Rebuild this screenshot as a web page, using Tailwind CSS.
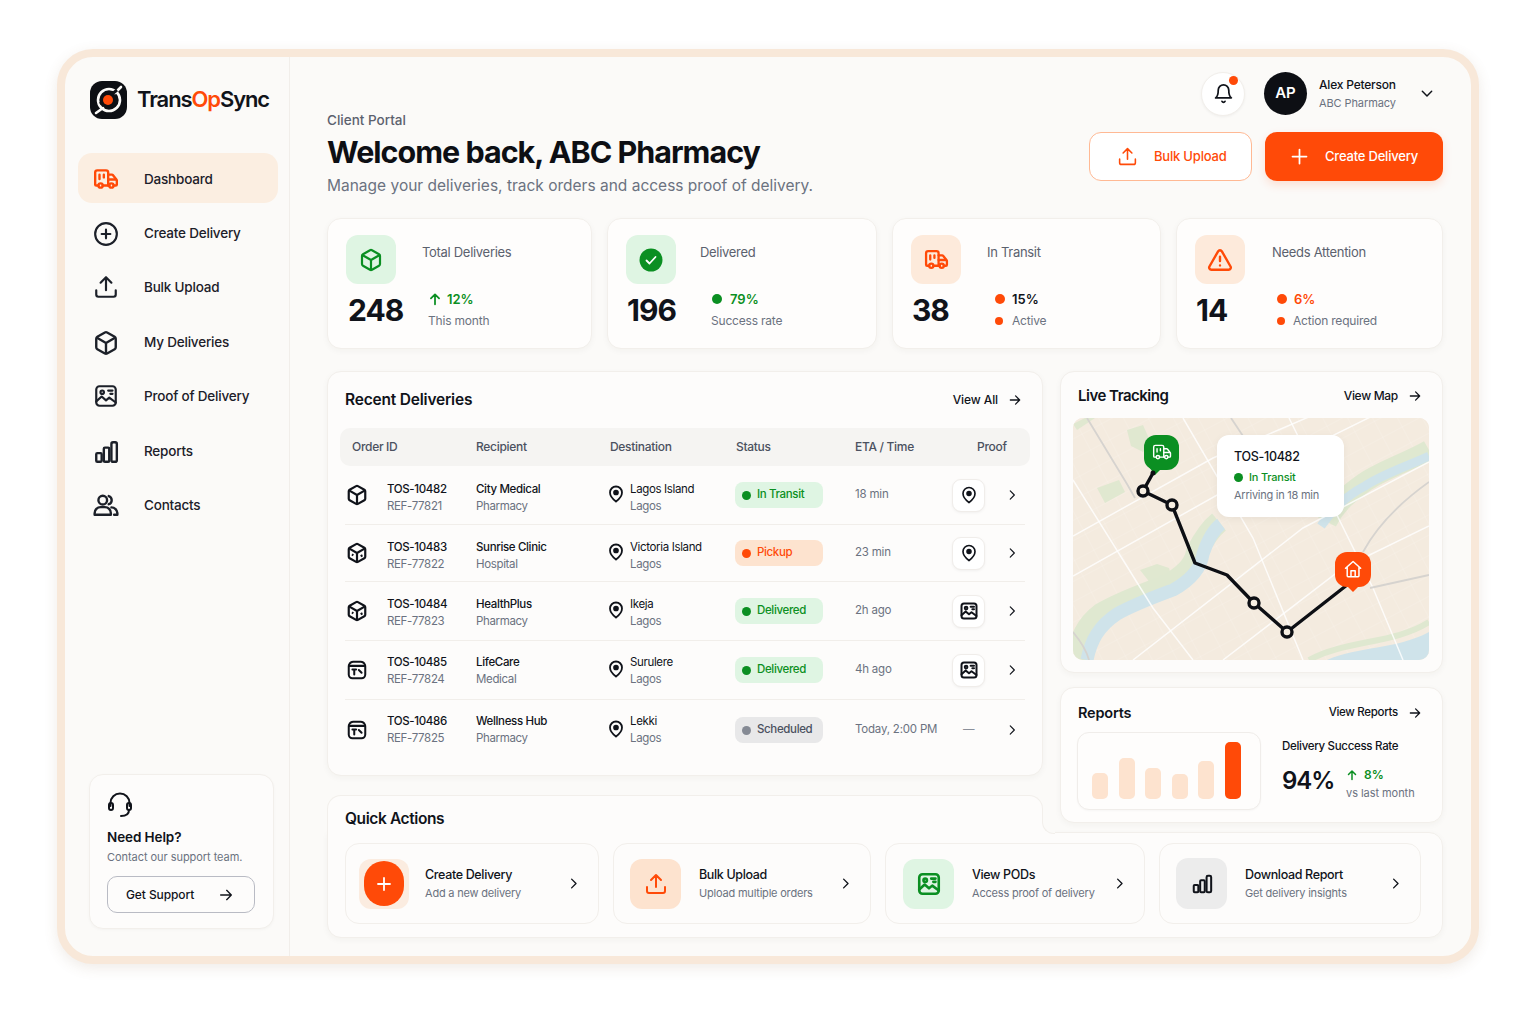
<!DOCTYPE html>
<html lang="en">
<head>
<meta charset="UTF-8">
<title>TransOpSync - Client Portal</title>
<script src="https://cdn.jsdelivr.net/npm/@tailwindcss/browser@4"></script>
</head>
<body class="bg-white font-['Inter',sans-serif] text-[#10131a] h-[1024px] overflow-hidden">

<!-- icon sprites -->
<svg class="hidden" width="0" height="0">
  <symbol id="truck" viewBox="0 0 24 24"><path d="M14 18V6a2 2 0 0 0-2-2H4a2 2 0 0 0-2 2v11a1 1 0 0 0 1 1h2"/><path d="M15 18H9"/><path d="M19 18h2a1 1 0 0 0 1-1v-3.650a1 1 0 0 0-.22-.62l-3.480-4.350A1 1 0 0 0 17.520 8H14"/><path d="M14 12.500h7M6 8v4M10 8v2.500"/><circle cx="17" cy="18" r="2"/><circle cx="7" cy="18" r="2"/></symbol>
  <symbol id="plus-circle" viewBox="0 0 24 24"><circle cx="12" cy="12" r="10"/><path d="M8 12h8M12 8v8"/></symbol>
  <symbol id="plus" viewBox="0 0 24 24"><path d="M4 12h16M12 4v16"/></symbol>
  <symbol id="upload" viewBox="0 0 24 24"><path d="M12 15V3M7 8l5-5 5 5M3 15v4a2 2 0 0 0 2 2h14a2 2 0 0 0 2-2v-4"/></symbol>
  <symbol id="box" viewBox="0 0 24 24"><path d="M21 8a2 2 0 0 0-1-1.730l-7-4a2 2 0 0 0-2 0l-7 4A2 2 0 0 0 3 8v8a2 2 0 0 0 1 1.730l7 4a2 2 0 0 0 2 0l7-4A2 2 0 0 0 21 16Z"/><path d="M3.300 7 12 12l8.700-5M12 22V12"/></symbol>
  <symbol id="box-a" viewBox="0 0 24 24"><path d="M21 8a2 2 0 0 0-1-1.730l-7-4a2 2 0 0 0-2 0l-7 4A2 2 0 0 0 3 8v8a2 2 0 0 0 1 1.730l7 4a2 2 0 0 0 2 0l7-4A2 2 0 0 0 21 16Z"/><path d="M3.300 7 12 12l8.700-5M12 22V12M6.500 13.500l1.500 1M16 15.500l2-1"/></symbol>
  <symbol id="box-b" viewBox="0 0 24 24"><path d="M8 3h8a5 5 0 0 1 3 1l1 1a4 4 0 0 1 1 3v9a4 4 0 0 1-4 4H7a4 4 0 0 1-4-4V8a4 4 0 0 1 1-3l1-1a5 5 0 0 1 3-1Z"/><path d="M4 7.500h16M7 11.500h4M9 11.500V17M14 12l3 3"/></symbol>
  <symbol id="image" viewBox="0 0 24 24"><rect x="3" y="3" width="18" height="18" rx="3"/><circle cx="8.500" cy="8.500" r="1.600"/><path d="M3 17l5-4.500 4 3.500 3-2.500 6 4.500"/><path d="M14 7h4M16 10h2"/></symbol>
  <symbol id="bars" viewBox="0 0 24 24"><rect x="3" y="13" width="5" height="8" rx="1"/><rect x="10" y="8" width="5" height="13" rx="1"/><rect x="17" y="3" width="5" height="18" rx="1.500"/></symbol>
  <symbol id="users" viewBox="0 0 24 24"><circle cx="9" cy="7.500" r="4"/><path d="M1.500 21v-1.500A5.500 5.500 0 0 1 7 14h4a5.500 5.500 0 0 1 5.500 5.500V21Z"/><path d="M14.500 3.700a4 4 0 0 1 0 7.600M17 14.200a5.500 5.500 0 0 1 5.500 5.300V21h-3"/></symbol>
  <symbol id="pin" viewBox="0 0 24 24"><path d="M20 10c0 6-8 12-8 12s-8-6-8-12a8 8 0 0 1 16 0Z"/><circle cx="12" cy="10" r="2.600" fill="currentColor"/></symbol>
  <symbol id="chev" viewBox="0 0 24 24"><path d="m9 5 7 7-7 7"/></symbol>
  <symbol id="arrow" viewBox="0 0 24 24"><path d="M4 12h16M13 5l7 7-7 7"/></symbol>
  <symbol id="arrow-up" viewBox="0 0 24 24"><path d="M12 21V4M5 11l7-7 7 7"/></symbol>
  <symbol id="home" viewBox="0 0 24 24"><path d="M3 11 12 3l9 8M5 9.500V20a1 1 0 0 0 1 1h12a1 1 0 0 0 1-1V9.500M9.500 21v-7h5v7"/></symbol>
</svg>

<div class="ml-[57px] mt-[49px] w-[1422px] h-[915px] rounded-[36px] border-[8px] border-[#f8e8d9] bg-[#fbfaf8] shadow-[0_4px_14px_rgba(120,90,60,0.12)] flex overflow-hidden">

  <!-- Sidebar -->
  <aside class="w-[225px] shrink-0 border-r border-[#f1eeea] flex flex-col pl-[13px] pr-[11px]">
    <div class="flex items-center gap-[10px] ml-[11px] mt-[23px] h-[40px]">
      <svg class="w-[39px] h-[40px] shrink-0" viewBox="0 0 39 40">
        <rect x="1" y="1" width="37" height="38" rx="12" fill="#0d0f14"/>
        <circle cx="20" cy="20" r="11" fill="none" stroke="#fbfaf8" stroke-width="2.600"/>
        <path d="M7 33 14 28M32 7l-6 6" stroke="#fbfaf8" stroke-width="2.600" stroke-linecap="round"/>
        <path d="M11 24 28 10" stroke="#0d0f14" stroke-width="3"/>
        <circle cx="19" cy="20" r="5" fill="#ff4a08"/>
      </svg>
      <span class="-ml-[1px] -mt-[2px] text-[22px] font-semibold tracking-[-1.100px] whitespace-nowrap">Trans<span class="text-[#ff4a08]">Op</span>Sync</span>
    </div>

    <nav class="mt-[33px] flex flex-col gap-[4.500px] text-[13.500px] tracking-[-0.200px] font-medium text-[#1c2029]">
      <a class="h-[50px] pt-[2px] rounded-[14px] bg-[#fbeee1] flex items-center pl-[15px] gap-[25px]">
        <svg class="w-[26px] h-[26px] text-[#ff4a08]" fill="none" stroke="currentColor" stroke-width="2.200" stroke-linecap="round" stroke-linejoin="round"><use href="#truck"/></svg>
        Dashboard
      </a>
      <a class="h-[50px] pt-[2px] flex items-center pl-[15px] gap-[25px]">
        <svg class="w-[26px] h-[26px]" fill="none" stroke="currentColor" stroke-width="2" stroke-linecap="round"><use href="#plus-circle"/></svg>
        Create Delivery
      </a>
      <a class="h-[50px] flex items-center pl-[15px] gap-[25px]">
        <svg class="w-[26px] h-[26px]" fill="none" stroke="currentColor" stroke-width="2" stroke-linecap="round" stroke-linejoin="round"><use href="#upload"/></svg>
        Bulk Upload
      </a>
      <a class="h-[50px] pt-[2px] flex items-center pl-[15px] gap-[25px]">
        <svg class="w-[26px] h-[26px]" fill="none" stroke="currentColor" stroke-width="2.200" stroke-linejoin="round"><use href="#box"/></svg>
        My Deliveries
      </a>
      <a class="h-[50px] flex items-center pl-[15px] gap-[25px]">
        <svg class="w-[26px] h-[26px]" fill="none" stroke="currentColor" stroke-width="2" stroke-linecap="round" stroke-linejoin="round"><use href="#image"/></svg>
        Proof of Delivery
      </a>
      <a class="h-[50px] pt-[2px] flex items-center pl-[15px] gap-[25px]">
        <svg class="w-[26px] h-[26px]" fill="none" stroke="currentColor" stroke-width="2.200" stroke-linejoin="round"><use href="#bars"/></svg>
        Reports
      </a>
      <a class="h-[50px] flex items-center pl-[15px] gap-[25px]">
        <svg class="w-[26px] h-[26px]" fill="none" stroke="currentColor" stroke-width="2.200" stroke-linecap="round" stroke-linejoin="round"><use href="#users"/></svg>
        Contacts
      </a>
    </nav>

    <!-- Need help -->
    <div class="mt-auto mb-[27px] ml-[11px] w-[185px] h-[155px] rounded-[14px] border border-[#f2efeb] bg-[#fdfcfb] shadow-[0_1px_3px_rgba(0,0,0,0.03)] px-[17px] pt-[17px]">
      <svg class="w-[26px] h-[26px]" viewBox="0 0 26 26" fill="none" stroke="#10131a" stroke-width="2" stroke-linecap="round">
        <path d="M3.500 14v-3a9.500 9.500 0 0 1 19 0v3"/>
        <rect x="2" y="11" width="4" height="7" rx="2"/>
        <rect x="20" y="11" width="4" height="7" rx="2"/>
        <path d="M22 18c0 4-3 6-8 6"/>
      </svg>
      <p class="mt-[9px] text-[13.500px] tracking-[-0.100px] leading-[20px] font-semibold">Need Help?</p>
      <p class="mt-[2px] text-[11px] leading-[16px] tracking-[-0.050px] text-[#6b7280] whitespace-nowrap">Contact our support team.</p>
      <button class="mt-[11px] w-[148px] h-[37px] rounded-[10px] border border-[#b9bbc4] flex items-center pl-[18px] pr-[20px] justify-between text-[12px] tracking-[-0.100px] font-medium">
        Get Support
        <svg class="w-[16px] h-[16px]" fill="none" stroke="currentColor" stroke-width="2" stroke-linecap="round" stroke-linejoin="round"><use href="#arrow"/></svg>
      </button>
    </div>
  </aside>

  <!-- Main -->
  <main class="flex-1 min-w-0 pl-[37px] pr-[28px]">
    <div class="h-[43px] mt-[15px] flex items-center justify-end">
      <div class="relative w-[44px] h-[44px] rounded-full bg-white border border-[#f2efeb] shadow-[0_1px_3px_rgba(0,0,0,0.05)] flex items-center justify-center">
        <svg class="w-[21px] h-[21px]" viewBox="0 0 24 24" fill="none" stroke="currentColor" stroke-width="2" stroke-linecap="round" stroke-linejoin="round"><path d="M6 8a6 6 0 0 1 12 0c0 7 3 9 3 9H3s3-2 3-9"/><path d="M10.300 21a1.940 1.940 0 0 0 3.400 0"/></svg>
        <span class="absolute top-[3px] right-[6px] w-[9px] h-[9px] rounded-full bg-[#ff4a08]"></span>
      </div>
      <div class="ml-[19px] w-[43px] h-[43px] rounded-full bg-[#0d0f14] text-white flex items-center justify-center text-[15px] font-semibold">AP</div>
      <div class="ml-[12px] w-[99px]">
        <p class="text-[12px] tracking-[-0.200px] leading-[18px] font-medium whitespace-nowrap">Alex Peterson</p>
        <p class="text-[11px] tracking-[-0.100px] leading-[18px] text-[#6b7280] whitespace-nowrap">ABC Pharmacy</p>
      </div>
      <svg class="ml-[1px] mr-[8px] w-[16px] h-[16px]" viewBox="0 0 24 24" fill="none" stroke="currentColor" stroke-width="2.200" stroke-linecap="round" stroke-linejoin="round"><path d="m5 8 7 7 7-7"/></svg>
    </div>

    <div class="flex justify-between -mt-[5px]">
      <div>
        <p class="text-[13.500px] leading-[20px] font-medium text-[#5b616e]">Client Portal</p>
        <h1 class="mt-[3px] text-[30.500px] leading-[38px] font-bold tracking-[-1px] text-[#0d0f14]">Welcome back, ABC Pharmacy</h1>
        <p class="mt-[5px] text-[15.500px] leading-[20px] text-[#6b7280]">Manage your deliveries, track orders and access proof of delivery.</p>
      </div>
      <div class="flex gap-[13px] mt-[22px]">
        <button class="w-[163px] h-[49px] rounded-[12px] border border-[#ffb994] bg-white text-[#ff4a08] flex items-center pl-[27px] gap-[16px] text-[13px] tracking-[-0.200px] font-medium">
          <svg class="w-[21px] h-[21px]" fill="none" stroke="currentColor" stroke-width="1.800" stroke-linecap="round" stroke-linejoin="round"><use href="#upload"/></svg>
          Bulk Upload
        </button>
        <button class="w-[178px] h-[49px] rounded-[12px] bg-[#ff4a08] text-white flex items-center pl-[24px] gap-[15px] text-[13px] tracking-[-0.200px] font-medium shadow-[0_4px_10px_rgba(255,74,8,0.15)]">
          <svg class="w-[21px] h-[21px]" fill="none" stroke="currentColor" stroke-width="2" stroke-linecap="round"><use href="#plus"/></svg>
          Create Delivery
        </button>
      </div>
    </div>

    <!-- Stat cards -->
    <div class="mt-[22px] grid grid-cols-[265px_270px_269px_1fr] gap-x-[15px]">
      <div class="h-[131px] rounded-[14px] border border-[#f2efeb] bg-[#fefdfc] shadow-[0_2px_6px_rgba(60,40,20,0.04)] pl-[18px] pt-[16px]">
        <div class="flex">
          <div class="w-[50px] h-[49px] rounded-[12px] bg-[#dff5e3] flex items-center justify-center text-[#0b8f22]">
            <svg class="w-[24px] h-[24px]" fill="none" stroke="currentColor" stroke-width="2.200" stroke-linejoin="round"><use href="#box"/></svg>
          </div>
          <p class="ml-[26px] mt-[8px] text-[13px] tracking-[-0.300px] leading-[18px] text-[#5b616e]">Total Deliveries</p>
        </div>
        <div class="flex mt-[6px]">
          <p class="ml-[2px] w-[80px] -mt-[2px] text-[30px] leading-[44px] font-bold tracking-[-1px]">248</p>
          <div class="-mt-[1px]">
            <p class="flex items-center text-[13px] leading-[20px] font-semibold text-[#0b8f22]"><svg class="w-[14px] h-[14px]" fill="none" stroke="currentColor" stroke-width="3" stroke-linecap="round" stroke-linejoin="round"><use href="#arrow-up"/></svg><span class="ml-[5px]">12%</span></p>
            <p class="mt-[3px] text-[12px] tracking-[-0.200px] leading-[18px] text-[#6b7280]">This month</p>
          </div>
        </div>
      </div>

      <div class="h-[131px] rounded-[14px] border border-[#f2efeb] bg-[#fefdfc] shadow-[0_2px_6px_rgba(60,40,20,0.04)] pl-[18px] pt-[16px]">
        <div class="flex">
          <div class="w-[50px] h-[49px] rounded-[12px] bg-[#dff5e3] flex items-center justify-center">
            <svg class="w-[24px] h-[24px]" viewBox="0 0 24 24"><circle cx="12" cy="12" r="11.500" fill="#0b8f22"/><path d="m7.500 12.500 3 3 6-6.500" fill="none" stroke="#fff" stroke-width="1.800" stroke-linecap="round" stroke-linejoin="round"/></svg>
          </div>
          <p class="ml-[24px] mt-[8px] text-[13px] tracking-[-0.300px] leading-[18px] text-[#5b616e]">Delivered</p>
        </div>
        <div class="flex mt-[6px]">
          <p class="ml-[1px] w-[84px] -mt-[2px] text-[30px] leading-[44px] font-bold tracking-[-1px]">196</p>
          <div class="-mt-[1px]">
            <p class="flex items-center text-[13px] leading-[20px] font-semibold text-[#0b8f22]"><span class="ml-[1px] w-[10px] h-[10px] rounded-full bg-[#0b8f22]"></span><span class="ml-[8px]">79%</span></p>
            <p class="mt-[3px] text-[12px] tracking-[-0.200px] leading-[18px] text-[#6b7280]">Success rate</p>
          </div>
        </div>
      </div>

      <div class="h-[131px] rounded-[14px] border border-[#f2efeb] bg-[#fefdfc] shadow-[0_2px_6px_rgba(60,40,20,0.04)] pl-[18px] pt-[16px]">
        <div class="flex">
          <div class="w-[50px] h-[49px] rounded-[12px] bg-[#fdeadb] flex items-center justify-center text-[#ff4a08]">
            <svg class="w-[25px] h-[25px]" fill="none" stroke="currentColor" stroke-width="2.200" stroke-linecap="round" stroke-linejoin="round"><use href="#truck"/></svg>
          </div>
          <p class="ml-[26px] mt-[8px] text-[13px] tracking-[-0.300px] leading-[18px] text-[#5b616e]">In Transit</p>
        </div>
        <div class="flex mt-[6px]">
          <p class="ml-[1px] w-[83px] -mt-[2px] text-[30px] leading-[44px] font-bold tracking-[-1px]">38</p>
          <div class="-mt-[1px]">
            <p class="flex items-center text-[13px] leading-[20px] font-semibold"><span class="w-[10px] h-[10px] rounded-full bg-[#ff4a08]"></span><span class="ml-[7px]">15%</span></p>
            <p class="mt-[3px] flex items-center text-[12px] tracking-[-0.200px] leading-[18px] text-[#6b7280]"><span class="w-[8px] h-[8px] rounded-full bg-[#ff4a08]"></span><span class="ml-[9px]">Active</span></p>
          </div>
        </div>
      </div>

      <div class="h-[131px] rounded-[14px] border border-[#f2efeb] bg-[#fefdfc] shadow-[0_2px_6px_rgba(60,40,20,0.04)] pl-[18px] pt-[16px]">
        <div class="flex">
          <div class="w-[50px] h-[49px] rounded-[12px] bg-[#fdeadb] flex items-center justify-center text-[#ff4a08]">
            <svg class="w-[26px] h-[26px]" viewBox="0 0 24 24" fill="none" stroke="currentColor" stroke-width="2.200" stroke-linecap="round" stroke-linejoin="round"><path d="m21.730 18-8-14a2 2 0 0 0-3.480 0l-8 14A2 2 0 0 0 4 21h16a2 2 0 0 0 1.730-3Z"/><path d="M12 9v4M12 17h.01"/></svg>
          </div>
          <p class="ml-[27px] mt-[8px] text-[13px] tracking-[-0.300px] leading-[18px] text-[#5b616e]">Needs Attention</p>
        </div>
        <div class="flex mt-[6px]">
          <p class="ml-[1px] w-[81px] -mt-[2px] text-[30px] leading-[44px] font-bold tracking-[-1px]">14</p>
          <div class="-mt-[1px]">
            <p class="flex items-center text-[13px] leading-[20px] font-semibold text-[#ff4a08]"><span class="w-[10px] h-[10px] rounded-full bg-[#ff4a08]"></span><span class="ml-[7px]">6%</span></p>
            <p class="mt-[3px] flex items-center text-[12px] tracking-[-0.200px] leading-[18px] text-[#6b7280]"><span class="w-[8px] h-[8px] rounded-full bg-[#ff4a08]"></span><span class="ml-[8px]">Action required</span></p>
          </div>
        </div>
      </div>
    </div>

    <!-- Tables and panels -->
    <div class="mt-[22px] flex gap-[17px]">
      <div class="w-[716px] shrink-0">
        <section class="h-[405px] rounded-[14px] border border-[#f2efeb] bg-[#fdfcfb] shadow-[0_2px_6px_rgba(60,40,20,0.04)] pt-[16px]">
          <div class="flex items-center justify-between pl-[17px] pr-[20px] h-[24px]">
            <h2 class="text-[15.500px] font-semibold tracking-[-0.200px]">Recent Deliveries</h2>
            <a class="flex items-center gap-[10px] text-[12px] tracking-[-0.100px] font-medium">View All
              <svg class="w-[14px] h-[14px]" fill="none" stroke="currentColor" stroke-width="2.200" stroke-linecap="round" stroke-linejoin="round"><use href="#arrow"/></svg>
            </a>
          </div>
          <div class="mt-[16px] mx-[12px] h-[38px] rounded-[10px] bg-[#f5f4f2] px-[12px] grid grid-cols-[124px_134px_126px_119px_122px_1fr] items-center text-[12px] tracking-[-0.300px] font-medium text-[#4b5160]">
            <span>Order ID</span><span>Recipient</span><span>Destination</span><span>Status</span><span>ETA / Time</span><span>Proof</span>
          </div>

          <div class="mx-[17px] text-[11.500px] tracking-[-0.350px]">
            <div class="h-[59px] border-b border-[#f1eeea] grid grid-cols-[131px_133px_126px_120px_97px_53px_1fr] items-center">
              <div class="flex items-center"><svg class="ml-[1px] w-[22px] h-[22px] shrink-0" fill="none" stroke="currentColor" stroke-width="2.400" stroke-linejoin="round"><use href="#box"/></svg><div class="ml-[19px] mt-[5px]"><p class="leading-[17px] font-medium">TOS-10482</p><p class="leading-[17px] text-[#6b7280]">REF-77821</p></div></div>
              <div class="mt-[5px]"><p class="leading-[17px] font-medium">City Medical</p><p class="leading-[17px] text-[#6b7280]">Pharmacy</p></div>
              <div class="flex items-center"><svg class="-ml-[2px] w-[18px] h-[18px] -mt-[2px] shrink-0" fill="none" stroke="currentColor" stroke-width="2.400"><use href="#pin"/></svg><div class="ml-[5px] mt-[5px]"><p class="leading-[17px] whitespace-nowrap">Lagos Island</p><p class="leading-[17px] text-[#6b7280]">Lagos</p></div></div>
              <span class="w-[88px] h-[26px] rounded-[8px] bg-[#dff5e3] text-[#0b8f22] flex items-center pl-[7px] gap-[6px] font-medium"><i class="w-[9px] h-[9px] rounded-full bg-[#0b8f22]"></i>In Transit</span>
              <span class="text-[#6b7280] tracking-[-0.200px]">18 min</span>
              <span class="w-[33px] h-[33px] rounded-[9px] bg-white border border-[#f0edea] shadow-[0_1px_3px_rgba(0,0,0,0.05)] flex items-center justify-center"><svg class="w-[18px] h-[18px]" fill="none" stroke="currentColor" stroke-width="2.200"><use href="#pin"/></svg></span>
              <svg class="w-[14px] h-[14px]" fill="none" stroke="currentColor" stroke-width="2" stroke-linecap="round" stroke-linejoin="round"><use href="#chev"/></svg>
            </div>
            <div class="h-[57px] border-b border-[#f1eeea] grid grid-cols-[131px_133px_126px_120px_97px_53px_1fr] items-center">
              <div class="flex items-center"><svg class="ml-[1px] w-[22px] h-[22px] shrink-0" fill="none" stroke="currentColor" stroke-width="2.400" stroke-linejoin="round"><use href="#box-a"/></svg><div class="ml-[19px] mt-[5px]"><p class="leading-[17px] font-medium">TOS-10483</p><p class="leading-[17px] text-[#6b7280]">REF-77822</p></div></div>
              <div class="mt-[5px]"><p class="leading-[17px] font-medium">Sunrise Clinic</p><p class="leading-[17px] text-[#6b7280]">Hospital</p></div>
              <div class="flex items-center"><svg class="-ml-[2px] w-[18px] h-[18px] -mt-[2px] shrink-0" fill="none" stroke="currentColor" stroke-width="2.400"><use href="#pin"/></svg><div class="ml-[5px] mt-[5px]"><p class="leading-[17px] whitespace-nowrap">Victoria Island</p><p class="leading-[17px] text-[#6b7280]">Lagos</p></div></div>
              <span class="w-[88px] h-[26px] rounded-[8px] bg-[#fde3cf] text-[#ff4a08] flex items-center pl-[7px] gap-[6px] font-medium"><i class="w-[9px] h-[9px] rounded-full bg-[#ff4a08]"></i>Pickup</span>
              <span class="text-[#6b7280] tracking-[-0.200px]">23 min</span>
              <span class="w-[33px] h-[33px] rounded-[9px] bg-white border border-[#f0edea] shadow-[0_1px_3px_rgba(0,0,0,0.05)] flex items-center justify-center"><svg class="w-[18px] h-[18px]" fill="none" stroke="currentColor" stroke-width="2.200"><use href="#pin"/></svg></span>
              <svg class="w-[14px] h-[14px]" fill="none" stroke="currentColor" stroke-width="2" stroke-linecap="round" stroke-linejoin="round"><use href="#chev"/></svg>
            </div>
            <div class="h-[59px] border-b border-[#f1eeea] grid grid-cols-[131px_133px_126px_120px_97px_53px_1fr] items-center">
              <div class="flex items-center"><svg class="ml-[1px] w-[22px] h-[22px] shrink-0" fill="none" stroke="currentColor" stroke-width="2.400" stroke-linejoin="round"><use href="#box-a"/></svg><div class="ml-[19px] mt-[4px]"><p class="leading-[17px] font-medium">TOS-10484</p><p class="leading-[17px] text-[#6b7280]">REF-77823</p></div></div>
              <div class="mt-[4px]"><p class="leading-[17px] font-medium">HealthPlus</p><p class="leading-[17px] text-[#6b7280]">Pharmacy</p></div>
              <div class="flex items-center"><svg class="-ml-[2px] w-[18px] h-[18px] -mt-[2px] shrink-0" fill="none" stroke="currentColor" stroke-width="2.400"><use href="#pin"/></svg><div class="ml-[5px] mt-[4px]"><p class="leading-[17px] whitespace-nowrap">Ikeja</p><p class="leading-[17px] text-[#6b7280]">Lagos</p></div></div>
              <span class="w-[88px] h-[26px] rounded-[8px] bg-[#dff5e3] text-[#0b8f22] flex items-center pl-[7px] gap-[6px] font-medium"><i class="w-[9px] h-[9px] rounded-full bg-[#0b8f22]"></i>Delivered</span>
              <span class="text-[#6b7280] tracking-[-0.200px]">2h ago</span>
              <span class="w-[33px] h-[33px] rounded-[9px] bg-white border border-[#f0edea] shadow-[0_1px_3px_rgba(0,0,0,0.05)] flex items-center justify-center"><svg class="w-[20px] h-[20px]" fill="none" stroke="currentColor" stroke-width="2.400" stroke-linecap="round" stroke-linejoin="round"><use href="#image"/></svg></span>
              <svg class="w-[14px] h-[14px]" fill="none" stroke="currentColor" stroke-width="2" stroke-linecap="round" stroke-linejoin="round"><use href="#chev"/></svg>
            </div>
            <div class="h-[59px] border-b border-[#f1eeea] grid grid-cols-[131px_133px_126px_120px_97px_53px_1fr] items-center">
              <div class="flex items-center"><svg class="ml-[1px] w-[22px] h-[22px] shrink-0" fill="none" stroke="currentColor" stroke-width="2.200" stroke-linecap="round" stroke-linejoin="round"><use href="#box-b"/></svg><div class="ml-[19px] mt-[2px]"><p class="leading-[17px] font-medium">TOS-10485</p><p class="leading-[17px] text-[#6b7280]">REF-77824</p></div></div>
              <div class="mt-[2px]"><p class="leading-[17px] font-medium">LifeCare</p><p class="leading-[17px] text-[#6b7280]">Medical</p></div>
              <div class="flex items-center"><svg class="-ml-[2px] w-[18px] h-[18px] -mt-[2px] shrink-0" fill="none" stroke="currentColor" stroke-width="2.400"><use href="#pin"/></svg><div class="ml-[5px] mt-[2px]"><p class="leading-[17px] whitespace-nowrap">Surulere</p><p class="leading-[17px] text-[#6b7280]">Lagos</p></div></div>
              <span class="w-[88px] h-[26px] rounded-[8px] bg-[#dff5e3] text-[#0b8f22] flex items-center pl-[7px] gap-[6px] font-medium"><i class="w-[9px] h-[9px] rounded-full bg-[#0b8f22]"></i>Delivered</span>
              <span class="text-[#6b7280] tracking-[-0.200px]">4h ago</span>
              <span class="w-[33px] h-[33px] rounded-[9px] bg-white border border-[#f0edea] shadow-[0_1px_3px_rgba(0,0,0,0.05)] flex items-center justify-center"><svg class="w-[20px] h-[20px]" fill="none" stroke="currentColor" stroke-width="2.400" stroke-linecap="round" stroke-linejoin="round"><use href="#image"/></svg></span>
              <svg class="w-[14px] h-[14px]" fill="none" stroke="currentColor" stroke-width="2" stroke-linecap="round" stroke-linejoin="round"><use href="#chev"/></svg>
            </div>
            <div class="h-[60px] grid grid-cols-[131px_133px_126px_120px_97px_53px_1fr] items-center">
              <div class="flex items-center"><svg class="ml-[1px] w-[22px] h-[22px] shrink-0" fill="none" stroke="currentColor" stroke-width="2.200" stroke-linecap="round" stroke-linejoin="round"><use href="#box-b"/></svg><div class="ml-[19px]"><p class="leading-[17px] font-medium">TOS-10486</p><p class="leading-[17px] text-[#6b7280]">REF-77825</p></div></div>
              <div><p class="leading-[17px] font-medium">Wellness Hub</p><p class="leading-[17px] text-[#6b7280]">Pharmacy</p></div>
              <div class="flex items-center"><svg class="-ml-[2px] w-[18px] h-[18px] -mt-[2px] shrink-0" fill="none" stroke="currentColor" stroke-width="2.400"><use href="#pin"/></svg><div class="ml-[5px]"><p class="leading-[17px] whitespace-nowrap">Lekki</p><p class="leading-[17px] text-[#6b7280]">Lagos</p></div></div>
              <span class="w-[88px] h-[26px] rounded-[8px] bg-[#e8e8e9] text-[#4b5160] flex items-center pl-[7px] gap-[6px] font-medium"><i class="w-[9px] h-[9px] rounded-full bg-[#858a94]"></i>Scheduled</span>
              <span class="text-[#6b7280] tracking-[-0.200px] whitespace-nowrap">Today, 2:00 PM</span>
              <span class="w-[33px] text-center text-[#8b909a]">—</span>
              <svg class="w-[14px] h-[14px]" fill="none" stroke="currentColor" stroke-width="2" stroke-linecap="round" stroke-linejoin="round"><use href="#chev"/></svg>
            </div>
          </div>
        </section>

        <!-- Quick actions heading tab, joined to the strip below -->
        <div class="relative z-10 mt-[19px] h-[38px] rounded-t-[14px] border border-b-0 border-[#f2efeb] bg-[#fdfcfb] pl-[17px] pt-[11px]">
          <h2 class="text-[15.500px] leading-[24px] font-semibold tracking-[-0.400px]">Quick Actions</h2>
          <span class="absolute -right-[13px] -bottom-[1px] w-[13px] h-[13px] bg-[#fdfcfb]"><span class="block w-full h-full rounded-bl-[12px] border-l border-b border-[#f2efeb] bg-[#fbfaf8]"></span></span>
        </div>
      </div>

      <div class="flex-1 min-w-0 flex flex-col gap-[14px]">
        <section class="h-[302px] rounded-[14px] border border-[#f2efeb] bg-[#fdfcfb] shadow-[0_2px_6px_rgba(60,40,20,0.04)] px-[12px] pt-[13px]">
          <div class="flex items-center justify-between pl-[5px] pr-[8px] h-[22px]">
            <h2 class="text-[15px] font-semibold tracking-[-0.500px]">Live Tracking</h2>
            <a class="flex items-center gap-[10px] text-[12px] tracking-[-0.300px] font-medium">View Map
              <svg class="w-[14px] h-[14px]" fill="none" stroke="currentColor" stroke-width="2.200" stroke-linecap="round" stroke-linejoin="round"><use href="#arrow"/></svg>
            </a>
          </div>
          <div class="relative mt-[11px] w-[356px] h-[242px] rounded-[10px] overflow-hidden bg-[#f4eadc]">
            <svg class="w-full h-full" viewBox="0 0 356 242">
              <defs>
                <pattern id="streets" width="22" height="18" patternUnits="userSpaceOnUse" patternTransform="rotate(-28)">
                  <path d="M0 0H22M0 0V18" stroke="#fff" stroke-opacity=".35" stroke-width=".7" fill="none"/>
                </pattern>
              </defs>
              <rect width="356" height="242" fill="#f4ebdf"/>
              <rect width="356" height="242" fill="url(#streets)"/>
              <!-- parks -->
              <path d="M54 12 70 7l8 18-8 9-12-6Z" fill="#e0e8d0"/>
              <path d="M24 70 46 62l6 12-20 11Z" fill="#e0e8d0"/>
              <path d="M67 152 84 146l12 4 2 8-20 8Z" fill="#e0e8d0"/>
              <path d="M0 6 12 0h10L4 12Z" fill="#e0e8d0"/>
              <!-- water -->
              <path d="M2 242C8 222 12 208 28 196 48 184 72 176 92 168 112 158 122 146 124 134 130 122 136 112 146 104" fill="none" stroke="#dfe8d0" stroke-width="22"/>
              <path d="M14 242C18 222 26 208 44 196 62 186 84 178 100 172 118 162 128 150 130 136 134 124 140 112 148 106" fill="none" stroke="#cfe3ea" stroke-width="13"/>
              <path d="M254 104C264 84 278 74 292 64 310 52 335 44 356 32" fill="none" stroke="#dfe8d0" stroke-width="20"/>
              <path d="M248 108C262 88 276 76 292 68 310 56 335 48 356 38" fill="none" stroke="#cfe3ea" stroke-width="9"/>
              <path d="M236 242C272 222 322 226 356 204" fill="none" stroke="#dfe8d0" stroke-width="6"/>
              <path d="M254 242C286 228 322 232 356 214V242Z" fill="#cfe3ea"/>
              <!-- main roads -->
              <g fill="none" stroke="#fff" stroke-width="1.500" stroke-opacity=".8">
                <path d="M0 118 140 40 280 -20"/>
                <path d="M0 158 178 58 356 -30"/>
                <path d="M60 242 230 110 356 44"/>
                <path d="M150 242 270 150 356 108"/>
                <path d="M0 62 80 190 120 242"/>
                <path d="M110 0 180 120 230 242"/>
                <path d="M216 0 300 170 330 242"/>
              </g>
              <!-- highways -->
              <g fill="none" stroke="#d6d3cf" stroke-width="1.800">
                <path d="M14 0 54 66 62 80"/>
                <path d="M158 0 170 18"/>
                <path d="M290 134C304 108 328 84 356 64"/>
                <path d="M297 170 356 157"/>
                <path d="M0 214C10 226 14 234 16 242"/>
              </g>
              <!-- route -->
              <path d="M80 55 70 73 99 87 122 145 154 157 181 185 214 214 274 167" fill="none" stroke="#0d0f14" stroke-width="3.400" stroke-linecap="round" stroke-linejoin="round"/>
              <g fill="#f6eee2" stroke="#0d0f14" stroke-width="3.400">
                <circle cx="70" cy="73" r="5"/>
                <circle cx="99" cy="87" r="5"/>
                <circle cx="181" cy="185" r="5"/>
                <circle cx="214" cy="214" r="5"/>
              </g>
              <!-- pins -->
              <rect x="71" y="17" width="35" height="35" rx="12" fill="#0b8f22"/>
              <path d="M76 49h14l-8 8Z" fill="#0b8f22"/>
              <circle cx="80" cy="55" r="2.500" fill="#0d0f14"/>
              <g fill="none" stroke="#fff" stroke-width="1.700" stroke-linecap="round" stroke-linejoin="round" transform="translate(79 24) scale(.84)"><use href="#truck" width="24" height="24"/></g>
              <rect x="262" y="134" width="36" height="35" rx="12" fill="#ff4a08"/>
              <path d="M273 167h14l-7 7Z" fill="#ff4a08"/>
              <g fill="none" stroke="#fff" stroke-width="1.800" stroke-linecap="round" stroke-linejoin="round" transform="translate(270 141) scale(.84)"><use href="#home" width="24" height="24"/></g>
            </svg>
            <div class="absolute left-[144px] top-[17px] w-[127px] h-[82px] rounded-[12px] bg-white shadow-[0_2px_8px_rgba(0,0,0,0.05)] pl-[17px] pt-[12px]">
              <p class="text-[12.500px] tracking-[-0.300px] leading-[19px] font-medium">TOS-10482</p>
              <p class="mt-[2px] flex items-center gap-[6px] text-[11px] tracking-[-0.200px] leading-[18px] font-medium text-[#0b8f22]"><i class="w-[9px] h-[9px] rounded-full bg-[#0b8f22]"></i>In Transit</p>
              <p class="text-[11px] tracking-[-0.250px] leading-[18px] text-[#6b7280] whitespace-nowrap">Arriving in 18 min</p>
            </div>
          </div>
        </section>

        <section class="h-[136px] rounded-[14px] border border-[#f2efeb] bg-[#fefdfc] shadow-[0_2px_6px_rgba(60,40,20,0.04)] pl-[16px] pr-[20px] pt-[14px]">
          <div class="flex items-center justify-between h-[22px] pl-[1px]">
            <h2 class="text-[14.500px] font-semibold tracking-[-0.200px]">Reports</h2>
            <a class="flex items-center gap-[10px] text-[11.500px] tracking-[-0.300px] font-medium">View Reports
              <svg class="w-[14px] h-[14px]" fill="none" stroke="currentColor" stroke-width="2.200" stroke-linecap="round" stroke-linejoin="round"><use href="#arrow"/></svg>
            </a>
          </div>
          <div class="flex mt-[8px]">
            <div class="w-[184px] h-[78px] rounded-[12px] border border-[#f0edea] bg-[#fefdfc] shadow-[0_1px_2px_rgba(0,0,0,0.03)] flex items-end gap-[10.500px] pl-[14px] pb-[10px]">
              <span class="w-[16px] h-[26px] rounded-[5px] bg-[#fde3cf]"></span>
              <span class="w-[16px] h-[41px] rounded-[5px] bg-[#fde3cf]"></span>
              <span class="w-[16px] h-[31px] rounded-[5px] bg-[#fde3cf]"></span>
              <span class="w-[16px] h-[25px] rounded-[5px] bg-[#fde3cf]"></span>
              <span class="w-[16px] h-[38px] rounded-[5px] bg-[#fde3cf]"></span>
              <span class="w-[16px] h-[57px] rounded-[5px] bg-[#ff4a08]"></span>
            </div>
            <div class="ml-[21px]">
              <p class="mt-[5px] text-[11.500px] tracking-[-0.300px] leading-[18px] font-medium whitespace-nowrap">Delivery Success Rate</p>
              <div class="flex mt-[10px]">
                <p class="-mt-[1px] text-[24px] leading-[34px] font-semibold tracking-[-1px] w-[64px]">94%</p>
                <div class="pt-[1px]">
                  <p class="flex items-center text-[12px] leading-[18px] font-semibold text-[#0b8f22]"><svg class="w-[12px] h-[12px]" fill="none" stroke="currentColor" stroke-width="3" stroke-linecap="round" stroke-linejoin="round"><use href="#arrow-up"/></svg><span class="ml-[6px]">8%</span></p>
                  <p class="text-[11px] tracking-[-0.050px] leading-[19px] text-[#6b7280] whitespace-nowrap">vs last month</p>
                </div>
              </div>
            </div>
          </div>
        </section>
      </div>
    </div>

    <!-- Quick action strip -->
    <div class="-mt-[1px] relative h-[106px] rounded-b-[14px] rounded-tr-[14px] border border-[#f2efeb] bg-[#fdfcfb] shadow-[0_2px_6px_rgba(60,40,20,0.04)] pl-[17px] pr-[21px] pt-[10px]">
      <span class="absolute left-[1px] -top-[1px] w-[714px] h-[1px] bg-[#fdfcfb]"></span>
      <div class="grid grid-cols-[254px_258px_260px_1fr] gap-x-[14px]">
        <a class="h-[81px] rounded-[14px] border border-[#f2efeb] bg-[#fdfcfb] flex items-center pl-[13px]">
          <span class="w-[50px] h-[50px] rounded-[12px] bg-[#fbece0] flex items-center justify-center shrink-0"><span class="w-[40px] h-[45px] rounded-full bg-[#ff4a08] text-white flex items-center justify-center"><svg class="w-[18px] h-[18px]" fill="none" stroke="currentColor" stroke-width="2.400" stroke-linecap="round"><use href="#plus"/></svg></span></span>
          <span class="ml-[16px] flex-1"><b class="block text-[12.500px] tracking-[-0.350px] leading-[18px] font-medium">Create Delivery</b><span class="block text-[11px] tracking-[-0.200px] leading-[18px] text-[#6b7280]">Add a new delivery</span></span>
          <svg class="mr-[17px] w-[15px] h-[15px]" fill="none" stroke="currentColor" stroke-width="2.200" stroke-linecap="round" stroke-linejoin="round"><use href="#chev"/></svg>
        </a>
        <a class="h-[81px] rounded-[14px] border border-[#f2efeb] bg-[#fdfcfb] flex items-center pl-[16px]">
          <span class="w-[51px] h-[50px] rounded-[12px] bg-[#fde3cf] text-[#ff4a08] flex items-center justify-center shrink-0"><svg class="w-[24px] h-[24px]" fill="none" stroke="currentColor" stroke-width="2" stroke-linecap="round" stroke-linejoin="round"><use href="#upload"/></svg></span>
          <span class="ml-[18px] flex-1"><b class="block text-[12.500px] tracking-[-0.350px] leading-[18px] font-medium">Bulk Upload</b><span class="block text-[11px] tracking-[-0.200px] leading-[18px] text-[#6b7280]">Upload multiple orders</span></span>
          <svg class="mr-[17px] w-[15px] h-[15px]" fill="none" stroke="currentColor" stroke-width="2.200" stroke-linecap="round" stroke-linejoin="round"><use href="#chev"/></svg>
        </a>
        <a class="h-[81px] rounded-[14px] border border-[#f2efeb] bg-[#fdfcfb] flex items-center pl-[17px]">
          <span class="w-[51px] h-[50px] rounded-[12px] bg-[#dff5e3] text-[#0b8f22] flex items-center justify-center shrink-0"><svg class="w-[26px] h-[26px]" fill="none" stroke="currentColor" stroke-width="2.400" stroke-linecap="round" stroke-linejoin="round"><use href="#image"/></svg></span>
          <span class="ml-[18px] flex-1"><b class="block text-[12.500px] tracking-[-0.350px] leading-[18px] font-medium">View PODs</b><span class="block text-[11px] tracking-[-0.200px] leading-[18px] text-[#6b7280] whitespace-nowrap">Access proof of delivery</span></span>
          <svg class="mr-[17px] w-[15px] h-[15px]" fill="none" stroke="currentColor" stroke-width="2.200" stroke-linecap="round" stroke-linejoin="round"><use href="#chev"/></svg>
        </a>
        <a class="h-[81px] rounded-[14px] border border-[#f2efeb] bg-[#fdfcfb] flex items-center pl-[16px]">
          <span class="w-[51px] h-[51px] rounded-[12px] bg-[#ececec] flex items-center justify-center shrink-0"><svg class="w-[22px] h-[22px]" fill="none" stroke="currentColor" stroke-width="2.200" stroke-linejoin="round"><use href="#bars"/></svg></span>
          <span class="ml-[18px] flex-1"><b class="block text-[12.500px] tracking-[-0.350px] leading-[18px] font-medium">Download Report</b><span class="block text-[11px] tracking-[-0.200px] leading-[18px] text-[#6b7280]">Get delivery insights</span></span>
          <svg class="mr-[17px] w-[15px] h-[15px]" fill="none" stroke="currentColor" stroke-width="2.200" stroke-linecap="round" stroke-linejoin="round"><use href="#chev"/></svg>
        </a>
      </div>
    </div>
  </main>
</div>
</body>
</html>
